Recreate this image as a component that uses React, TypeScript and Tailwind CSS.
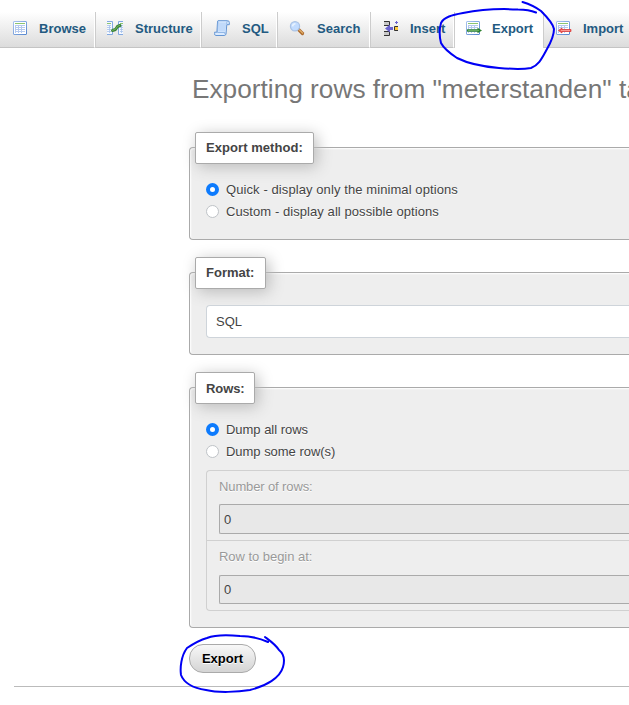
import type { ReactNode } from "react";

const Sheet = () => (
  <>
    <defs>
      <linearGradient id="frame" x1="0" y1="0" x2="1" y2="1">
        <stop offset="0" stopColor="#a9c4ee" />
        <stop offset="1" stopColor="#5586cf" />
      </linearGradient>
    </defs>
    <rect x="1.5" y="1.5" width="13" height="13" rx=".5" fill="#fff" stroke="url(#frame)" />
    <path d="M3 3.500h10" stroke="#8cc56f" />
    <path d="M3 5h10v8H3z" fill="#b4c9ee" />
    <path d="M4 6.500h2M7 6.500h2M10 6.500h3M4 8.500h2M7 8.500h2M10 8.500h3M4 10.500h2M7 10.500h2M10 10.500h3M4 12.500h2M7 12.500h2M10 12.500h3" stroke="#fff" />
  </>
);

const Svg = ({ children }: { children: ReactNode }) => (
  <svg className="h-4 w-4 shrink-0 overflow-visible" viewBox="0 0 16 16" fill="none">
    {children}
  </svg>
);

const BrowseIcon = () => (
  <Svg>
    <Sheet />
  </Svg>
);

const StructureIcon = () => (
  <Svg>
    <path d="M0 1h5v13H0zM12 1h4v13h-4z" fill="#f4f8ff" />
    <path d="M0 1.500h5.500v13H0M16 1.500h-4.500v13H16" stroke="#82a9e2" />
    <path d="M0 3.500h4M13 3.500h3" stroke="#8cc56f" />
    <path d="M0 5.500h4M0 7.500h4M0 9.500h4M0 11.500h4M13 5.500h3M13 7.500h3M13 9.500h3M13 11.500h3M2.500 5v8M14.500 5v8" stroke="#a7c1ea" strokeWidth=".8" />
    <path d="M5.500 10.500l3-1 2-3 2.500-1" stroke="#397f38" strokeWidth="3" strokeLinecap="round" strokeLinejoin="round" />
    <path d="M5.500 10.300l3-1 2-3 2-.8" stroke="#72ba5e" strokeWidth="1" strokeLinecap="round" />
  </Svg>
);

const SqlIcon = () => (
  <Svg>
    <path d="M4 .7h9.500q1.800 0 1.800 1.800v2.200h-2.500L12 14q-.3 1.500-1.800 1.500H1.800Q.3 15.300.6 13.500v-1.300h2.300L3.500 2Q3.300.9 4 .7z" fill="#d9eaff" stroke="#6495d3" />
    <path d="M4.800 2.500h7.500l-.8 9h-7z" fill="#c1dafa" />
    <path d="M4 1.500L3.500 12.500h7.300q-.4 2 1 1.800M12.800 4.500Q12.300 2 13.500 1" stroke="#82abe0" strokeWidth=".8" />
  </Svg>
);

const SearchIcon = () => (
  <Svg>
    <path d="M9.500 9.500l4 4" stroke="#ac692c" strokeWidth="3.200" strokeLinecap="round" />
    <path d="M10.500 10l3.200 3.200" stroke="#e6b56f" strokeWidth="1.200" strokeLinecap="round" />
    <circle cx="6" cy="6.300" r="4.600" fill="#c2dcff" stroke="#a9c2e4" strokeWidth="1.200" />
    <path d="M3.500 6.300Q4 3.800 6.500 3.800" stroke="#e8f3ff" strokeWidth="1.600" />
  </Svg>
);

const InsertIcon = () => (
  <Svg>
    <path d="M0 2h5v3H0zM0 11h5v4H0z" fill="#c8c8c8" />
    <path d="M0 1.500h5.500v4H0M0 11.500h5.500v4H0" stroke="#333" />
    <path d="M1 8.500l5-4V7h3v3H6v2.500z" fill="#6a63cf" />
    <path d="M12.500 1v3M11 2.500h3" stroke="#6a63cf" />
    <path d="M14 6.500h-3.500v4H14" fill="#ffca3c" stroke="#333" />
  </Svg>
);

const ExportIcon = () => (
  <Svg>
    <Sheet />
    <path d="M2 10.500h11" stroke="#2d812f" strokeWidth="2.400" />
    <path d="M12.500 7.700l4.500 2.800-4.500 2.800z" fill="#2d812f" />
    <path d="M3 10.500h11" stroke="#79bd6e" strokeWidth=".8" />
  </Svg>
);

const ImportIcon = () => (
  <Svg>
    <Sheet />
    <path d="M3.500 10.500l3.500-2.500v1.500h9v2H7V13z" fill="#ef5b55" stroke="#da3534" strokeWidth=".7" />
    <path d="M6 10.500h9" stroke="#ffaaa5" strokeWidth=".8" />
  </Svg>
);

const tabs = [
  { label: "Browse", icon: <BrowseIcon />, box: "w-[95px] pl-3", gap: "ml-[11px]" },
  { label: "Structure", icon: <StructureIcon />, box: "w-[106px] pl-[11px]", gap: "ml-3" },
  { label: "SQL", icon: <SqlIcon />, box: "w-[76px] pl-3", gap: "ml-3" },
  { label: "Search", icon: <SearchIcon />, box: "w-[93px] pl-[11px]", gap: "ml-3" },
  { label: "Insert", icon: <InsertIcon />, box: "w-[84px] pl-[13px]", gap: "ml-[10px]" },
  { label: "Export", icon: <ExportIcon />, box: "w-[89px] pl-[10px]", gap: "ml-[11px]", active: true },
  { label: "Import", icon: <ImportIcon />, box: "w-[96px] pl-[11px]", gap: "ml-3" },
];

const Section = ({ title, size, legend, children }: { title: string; size: string; legend: string; children: ReactNode }) => (
  <section className={`rounded-l-[4px] border border-r-0 border-[#aaa] bg-[#eee] pl-4 shadow-[inset_1px_1px_2px_#fff] ${size}`}>
    <h3 className={`-mt-4 -ml-[11px] flex h-8 items-center rounded-[2px] border border-[#aaa] bg-white pl-[10px] text-[13px] font-bold whitespace-nowrap text-[#444] shadow-[3px_3px_15px_#bbb] ${legend}`}>
      {title}
    </h3>
    {children}
  </section>
);

const Radio = ({ label, track, on }: { label: string; track: string; on?: boolean }) => (
  <label className="flex h-[22px] items-center gap-[7px] text-[13px] whitespace-nowrap [text-shadow:0_1px_0_#fff]">
    <span className={on ? "h-[13px] w-[13px] rounded-full border-4 border-[#0d7bfd] bg-white" : "h-[13px] w-[13px] rounded-full border border-[#bfc3c7] bg-white"} />
    <span className={`pt-0.5 ${track}`}>{label}</span>
  </label>
);

const Field = ({ label, pad, track, input }: { label: string; pad: string; track: string; input: string }) => (
  <div className={`h-[70px] pl-3 ${pad}`}>
    <div className={`h-[19px] text-[13px] leading-[18px] text-[#999] [text-shadow:0_1px_0_#fff] ${track}`}>{label}</div>
    <div className={`flex items-center rounded-l-[2px] border border-r-0 border-[#aaa] bg-[#e8e8e8] pl-1 text-[13px] ${input}`}>0</div>
  </div>
);

export default function App() {
  return (
    <div className="relative h-[705px] w-[629px] overflow-hidden bg-white pt-3 font-['Liberation_Sans',Arial,sans-serif] text-[#444]">
      <nav className="flex h-9 w-[639px]">
        {tabs.map((t) => (
          <a
            key={t.label}
            className={`flex shrink-0 items-center border-l text-[13px] font-bold text-[#235a81] first:border-l-0 ${t.box} ${
              t.active ? "border-[#ccc] bg-white pb-px" : "border-r border-b border-r-white border-b-[#c4c4c4] border-l-[#ccc] bg-linear-to-b from-white to-[#dcdcdc]"
            }`}
          >
            <span className="-mt-[3px] flex">{t.icon}</span>
            <span className={`-mt-px ${t.gap}`}>{t.label}</span>
          </a>
        ))}
      </nav>

      <main className="ml-[189px] w-[450px]">
        <h2 className="mt-6 ml-[3px] h-[34px] text-[26.24px] leading-[34px] whitespace-nowrap text-[#777]">
          Exporting rows from "meterstanden" table
        </h2>

        <div className="mt-[41px]">
          <Section title="Export method:" size="h-[93px]" legend="w-[119px] tracking-[0.06px]">
            <div className="mt-[14px]">
              <Radio label="Quick - display only the minimal options" track="tracking-[0.09px]" on />
              <Radio label="Custom - display all possible options" track="tracking-[0.07px]" />
            </div>
          </Section>
        </div>

        <div className="mt-8">
          <Section title="Format:" size="h-[83px]" legend="w-[71px]">
            <div className="mt-4 flex h-[33px] items-center rounded-l-[4px] border border-r-0 border-[#ced4da] bg-white pl-[9px] text-[13px]">SQL</div>
          </Section>
        </div>

        <div className="mt-8">
          <Section title="Rows:" size="h-[241px]" legend="w-[60px] pt-0.5 tracking-[-0.1px]">
            <div className="mt-[14px]">
              <Radio label="Dump all rows" track="tracking-[-0.03px]" on />
              <Radio label="Dump some row(s)" track="tracking-[-0.03px]" />
            </div>
            <div className="mt-2 h-[141px] rounded-l-[4px] border border-r-0 border-[#d0d0d0]">
              <Field label="Number of rows:" pad="border-b border-[#d0d0d0] pt-[7px]" track="tracking-[-0.12px]" input="mt-[7px] h-[30px] pt-0.5" />
              <Field label="Row to begin at:" pad="pt-[7px]" track="tracking-[-0.04px]" input="mt-2 h-[29px]" />
            </div>
          </Section>
        </div>

        <button className="mt-4 flex h-[29px] w-[67px] items-center justify-center rounded-[14px] border border-[#aaa] bg-linear-to-b from-[#f8f8f8] to-[#d4d4d4] text-[13px] font-bold text-black [text-shadow:0_1px_0_#fff]">
          Export
        </button>
      </main>

      <div className="mt-[13px] ml-[14px] h-px bg-[#bbb]" />

      <svg className="pointer-events-none absolute inset-0 h-[705px] w-[629px]" viewBox="0 0 629 705" fill="none" stroke="#0000f5" strokeWidth="2" strokeLinecap="round" strokeLinejoin="round">
        <path d="M536 12.500C530 10 525 9.500 518 9.500C500 8.500 478 10 463 13C452 15 444 17 441 23C439 30 440 39 441 43C444 49 451 54 457 58C469 64 487 67 499 68C511 69 525 69 531 68C539 65 542 58 547 49C551 42 554 36 554 29C553 23 547 17 541 11C537 8 529 4 522.500 2" />
        <path d="M268 642C259 638 251 636 240 636C230 635 217 634 207 638C200 640 193 644 187 648C181 656 180 668 181 675C184 683 193 688 206 690C218 693 238 692 250 690C266 686 280 678 283 667C285 660 284 654 279 650C275 644 269 640 265 637" />
      </svg>
    </div>
  );
}
